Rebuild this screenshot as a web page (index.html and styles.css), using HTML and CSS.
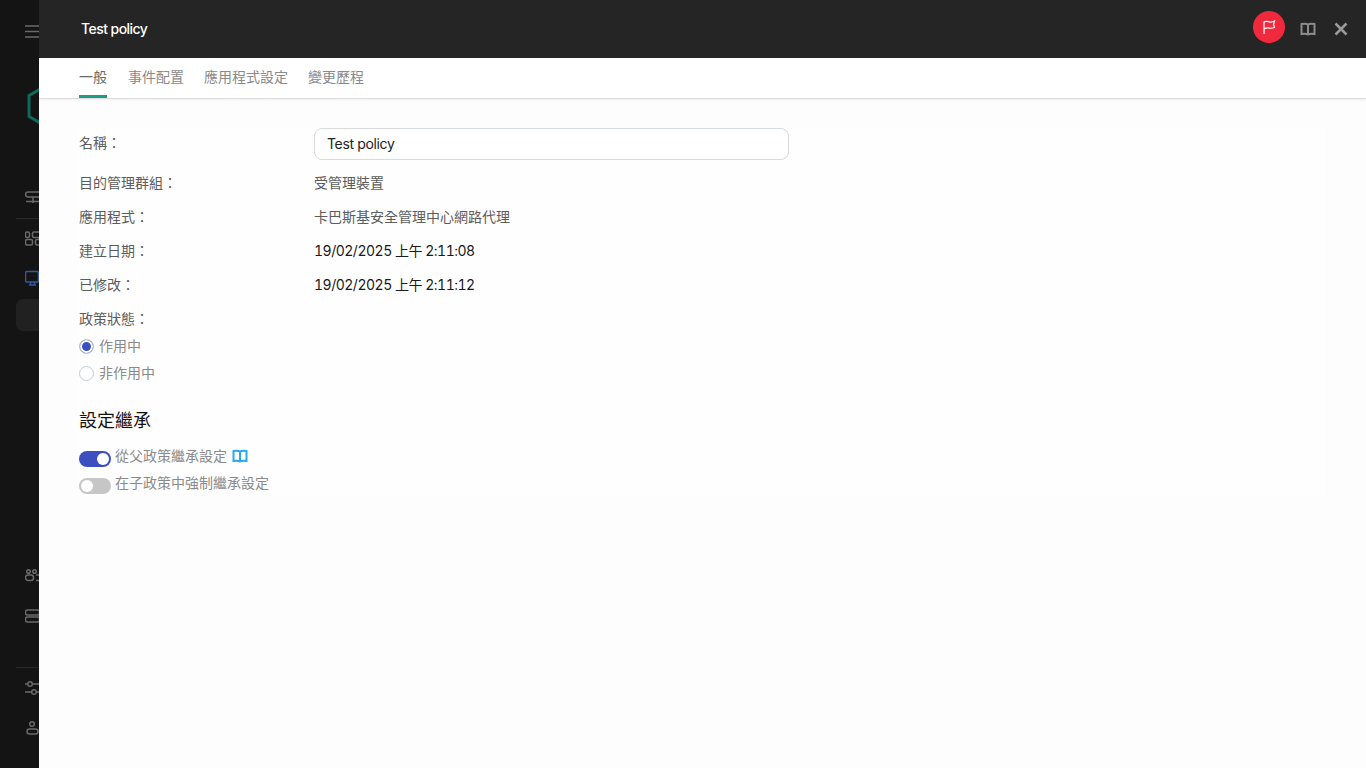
FILE: index.html
```html
<!DOCTYPE html>
<html lang="zh-Hant">
<head>
<meta charset="utf-8">
<title>Test policy</title>
<link rel="stylesheet" href="styles.css">
</head>
<body>
<div class="app">
  <aside class="rail">
    <div class="rail-item first"><svg class="ico" viewBox="0 0 20 20"><path d="M0 4h16M0 9.500h16M0 15h16"/></svg></div>
    <svg class="logo" viewBox="0 0 40 46"><path d="M21 1.500 2 12.500v21L21 44.500"/></svg>
    <div class="rail-item section"><svg class="ico" viewBox="0 0 20 20"><rect x="0.500" y="5" width="18" height="5" rx="2.500"/><path d="M8 10v6M1 14.500h14"/></svg></div>
    <div class="rail-rule"></div>
    <div class="rail-item"><svg class="ico" viewBox="0 0 20 20"><rect x="0.500" y="3" width="4" height="5.500" rx="1.500"/><rect x="7.500" y="3" width="10" height="5.500" rx="1.500"/><rect x="0.500" y="10.500" width="7" height="5.500" rx="1.500"/><rect x="10.500" y="10.500" width="7" height="5.500" rx="1.500"/></svg></div>
    <div class="rail-item"><svg class="ico blue" viewBox="0 0 20 20"><rect x="0.500" y="2.500" width="13" height="10.500" rx="1.500"/><path d="M4 16h7M5.500 13v3M9.500 13v3"/></svg></div>
    <div class="rail-active"></div>
    <div class="rail-gap"></div>
    <div class="rail-item"><svg class="ico" viewBox="0 0 20 20"><circle cx="3.500" cy="5.500" r="1.800"/><circle cx="9.500" cy="5.500" r="1.800"/><rect x="0.500" y="9" width="8" height="5.500" rx="2.500"/><path d="M11 9h4M11 14.500h4"/></svg></div>
    <div class="rail-item"><svg class="ico" viewBox="0 0 20 20"><rect x="0.500" y="4" width="14" height="5" rx="2"/><rect x="0.500" y="11" width="14" height="5" rx="2"/></svg></div>
    <div class="rail-rule lower"></div>
    <div class="rail-item"><svg class="ico" viewBox="0 0 20 20"><path d="M0 6h2.500M7.500 6H16M0 14h6.500M11.500 14H16"/><circle cx="5" cy="6" r="2.300"/><circle cx="9" cy="14" r="2.300"/></svg></div>
    <div class="rail-item"><svg class="ico" viewBox="0 0 20 20"><circle cx="7" cy="6" r="2.300"/><rect x="2" y="11" width="11" height="5" rx="2.500"/></svg></div>
  </aside>
  <main class="panel">
    <header class="topbar">
      <h1 class="title">Test policy</h1>
      <div class="actions">
        <span class="flag"><svg viewBox="0 0 16 16"><path d="M3 15V3c2-1.300 3.500-.6 5-.2s3.500.3 5.500-.8l-1 3.500 1 3c-2 .8-3.500.9-5 .6s-3.500-.4-5.500.9"/></svg></span>
        <svg class="book grey" viewBox="0 0 16 16"><path d="M8 3.500C6.500 2.500 4 2.500 1.500 3v10c2.500-.5 5-.5 6.500.5 1.500-1 4-1 6.500-.5V3C12 2.500 9.500 2.500 8 3.500zM8 3.500v10"/></svg>
        <svg class="close" viewBox="0 0 14 14"><path d="M1.500 1.500l11 11M12.500 1.500l-11 11"/></svg>
      </div>
    </header>
    <nav class="tabs">
      <span class="tab on">一般</span>
      <span class="tab">事件配置</span>
      <span class="tab">應用程式設定</span>
      <span class="tab">變更歷程</span>
    </nav>
    <section class="body">
      <div class="form">
        <div class="row name"><span class="label">名稱：</span><span class="input">Test policy</span></div>
        <div class="row"><span class="label">目的管理群組：</span><span class="value">受管理裝置</span></div>
        <div class="row"><span class="label">應用程式：</span><span class="value">卡巴斯基安全管理中心網路代理</span></div>
        <div class="row"><span class="label">建立日期：</span><span class="value dark">19/02/2025 上午 2:11:08</span></div>
        <div class="row"><span class="label">已修改：</span><span class="value dark">19/02/2025 上午 2:11:12</span></div>
        <div class="row status"><span class="label">政策狀態：</span></div>
        <div class="radio on"><i class="dot"></i><span>作用中</span></div>
        <div class="radio"><i class="dot"></i><span>非作用中</span></div>
        <h2 class="heading">設定繼承</h2>
        <div class="switch on"><i class="knob"></i><span>從父政策繼承設定</span><svg class="book blue" viewBox="0 0 16 16"><path d="M8 3.500C6.500 2.500 4 2.500 1.500 3v10c2.500-.5 5-.5 6.500.5 1.500-1 4-1 6.500-.5V3C12 2.500 9.500 2.500 8 3.500zM8 3.500v10"/></svg></div>
        <div class="switch"><i class="knob"></i><span>在子政策中強制繼承設定</span></div>
      </div>
    </section>
  </main>
</div>
</body>
</html>
```
FILE: styles.css
```css
* { box-sizing: border-box; }
html, body { margin: 0; height: 100%; }
body {
  font-family: Inter, "Noto Sans CJK TC", "Noto Sans CJK JP", sans-serif;
  font-size: 14px;
  color: #222;
  overflow: hidden;
}
.app { display: flex; height: 768px; }

/* dimmed navigation rail, mostly hidden under the panel */
.rail {
  width: 39px;
  flex: none;
  overflow: hidden;
  background: #141414;
  display: flex;
  flex-direction: column;
  padding: 12px 0 20px;
}
.rail-item { height: 40px; flex: none; padding-left: 25px; display: flex; align-items: center; }
.rail-item.section { margin-top: 48px; }
.ico { width: 20px; height: 20px; flex: none; fill: none; stroke: #6a6a6a; stroke-width: 1.500; }
.ico.blue { stroke: #34579f; }
.logo { width: 40px; height: 46px; flex: none; margin: 31px 0 0 27px; fill: none; stroke: #0f6a5b; stroke-width: 3; }
.rail-rule { height: 1px; flex: none; margin: 1px 0 0 16px; background: #2a2a2a; }
.rail-rule.lower { margin-top: 31px; }
.rail-active { height: 32px; flex: none; margin-left: 16px; background: #212121; border-radius: 7px 0 0 7px; }
.rail-gap { flex: 1; }

/* panel */
.panel { flex: 1; min-width: 0; display: flex; flex-direction: column; background: #fdfdfd; }
.topbar {
  height: 58px;
  flex: none;
  background: #252525;
  display: flex;
  align-items: center;
  justify-content: space-between;
  padding: 0 18px 2px 42px;
}
.title { margin: 0; font-size: 14px; font-weight: 500; letter-spacing: -.55px; color: #fff; }
.actions { display: flex; align-items: center; }
.flag { width: 32px; height: 32px; margin-top: -2px; border-radius: 50%; background: #f0293c; display: flex; align-items: center; justify-content: center; }
.flag svg { width: 16px; height: 16px; fill: none; stroke: #fff; stroke-width: 1.200; }
.book { width: 16px; height: 16px; fill: none; stroke-width: 2; }
.book.grey { stroke: #8c8c8c; margin-left: 15px; margin-top: 2px; }
.close { width: 14px; height: 14px; margin-left: 18px; margin-top: 2px; fill: none; stroke: #9a9a9a; stroke-width: 2.500; }

.tabs {
  height: 41px;
  flex: none;
  background: #fff;
  border-bottom: 1px solid #dcdcdc;
  box-shadow: 0 1px 2px rgba(0, 0, 0, .06);
  display: flex;
  gap: 20px;
  padding-left: 40px;
}
.tab { height: 40px; padding-top: 9px; line-height: 20px; color: #8a8a8a; }
.tab.on { color: #6a6a6a; border-bottom: 3px solid #1f9c85; margin-right: 1px; }

.body { flex: 1; padding: 29px 40px 0; }
.form { background: #fefefe; height: 368px; }
.row { display: flex; height: 34px; align-items: center; }
.row.name { height: 38px; align-items: flex-start; }
.row.status { height: 31px; align-items: flex-start; }
.row.status .label { line-height: 34px; }
.label { width: 235px; flex: none; color: #5c5c5c; line-height: 30px; }
.value { color: #5c5c5c; line-height: 30px; }
.value.dark { color: #1a1a1a; font-variant-numeric: tabular-nums; letter-spacing: -.5px; }
.input {
  width: 475px;
  height: 32px;
  border: 1px solid #d6dade;
  border-radius: 8px;
  background: #fff;
  padding: 0 12px;
  line-height: 30px;
  letter-spacing: -.35px;
  color: #222;
}
.radio { height: 27px; display: flex; align-items: center; gap: 5px; color: #8a8a8a; }
.radio span { line-height: 20px; margin-top: -1px; }
.dot { width: 15px; height: 15px; border: 1px solid #c8ccd2; border-radius: 50%; background: #fff; flex: none; }
.radio.on .dot { background: #3b4fc0; box-shadow: inset 0 0 0 2px #fff; }
.heading { margin: 21px 0 9px; font-size: 18px; font-weight: 400; line-height: 26px; color: #111; }
.switch { height: 27px; display: flex; align-items: center; gap: 4px; color: #8a8a8a; }
.knob { width: 32px; height: 16px; border-radius: 8px; background: #c6c6c6; flex: none; position: relative; margin-top: 4px; }
.knob::after { content: ""; position: absolute; left: 2px; top: 2px; width: 12px; height: 12px; border-radius: 50%; background: #fff; }
.switch.on .knob { background: #3b4fc0; }
.switch.on .knob::after { left: 18px; }
.switch span { margin-top: -2px; line-height: 20px; }
.book.blue { stroke: #2aa8f2; margin-left: 1px; margin-top: -2px; }
```
